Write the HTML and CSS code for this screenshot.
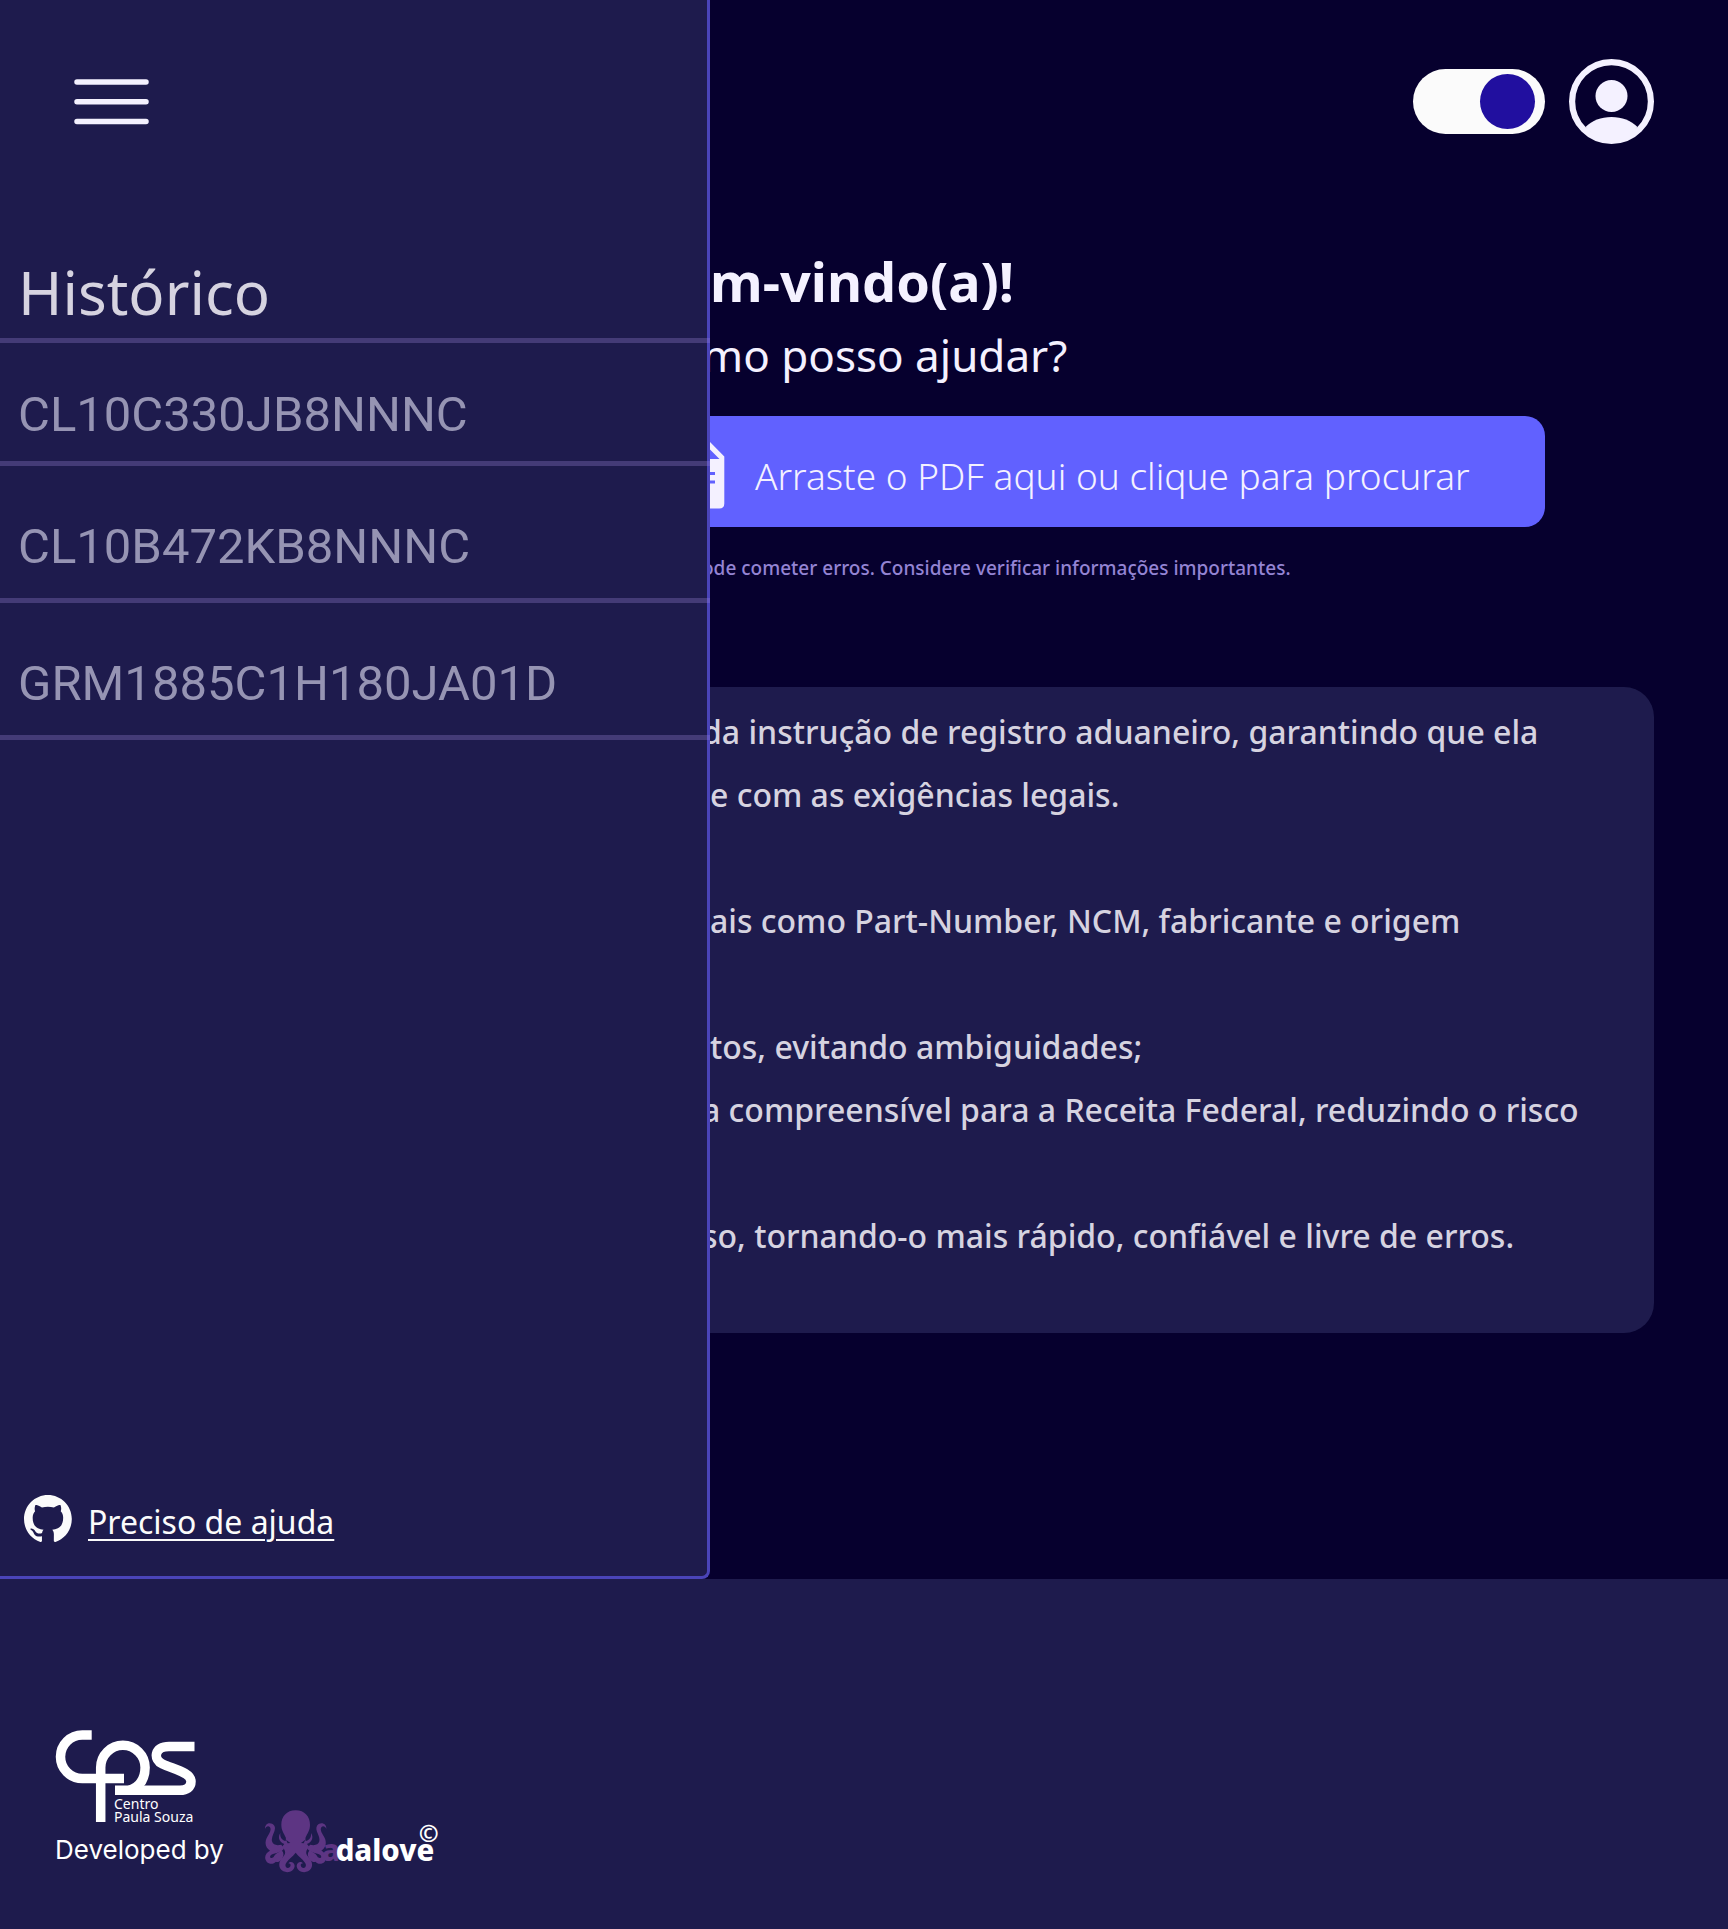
FILE: index.html
```html
<!DOCTYPE html>
<html lang="pt-BR">
<head>
<meta charset="utf-8">
<meta name="viewport" content="width=device-width, initial-scale=1">
<title>Histórico</title>
<link rel="stylesheet" href="styles.css">
</head>
<body>
<div class="shell">
  <aside class="sidebar">
    <button class="menu-button" type="button" aria-label="Menu">
      <svg width="75" height="46" viewBox="0 0 75 46" aria-hidden="true">
        <path d="M3 3H72M3 22.700H72M3 42.500H72" stroke="#f4f1ff" stroke-width="5.500" stroke-linecap="round"/>
      </svg>
    </button>
    <h2 class="history-title">Histórico</h2>
    <ul class="history-list">
      <li>CL10C330JB8NNNC</li>
      <li>CL10B472KB8NNNC</li>
      <li>GRM1885C1H180JA01D</li>
    </ul>
    <div class="help">
      <svg width="48" height="47" viewBox="0 0 98 96" aria-hidden="true">
        <path fill="#fbfbfb" fill-rule="evenodd" d="M48.854 0C21.839 0 0 22 0 49.217c0 21.756 13.993 40.172 33.405 46.690 2.427.490 3.316-1.059 3.316-2.362 0-1.141-.080-5.052-.080-9.127-13.590 2.934-16.420-5.867-16.420-5.867-2.184-5.704-5.420-7.170-5.420-7.170-4.448-3.015.324-3.015.324-3.015 4.934.326 7.523 5.052 7.523 5.052 4.367 7.496 11.404 5.378 14.235 4.074.404-3.178 1.699-5.378 3.074-6.600-10.839-1.141-22.243-5.378-22.243-24.283 0-5.378 1.940-9.778 5.014-13.200-.485-1.222-2.184-6.275.486-13.038 0 0 4.125-1.304 13.426 5.052a46.970 46.970 0 0 1 12.214-1.630c4.125 0 8.330.571 12.213 1.630 9.302-6.356 13.427-5.052 13.427-5.052 2.670 6.763.970 11.816.485 13.038 3.155 3.422 5.015 7.822 5.015 13.200 0 18.905-11.404 23.060-22.324 24.283 1.780 1.548 3.316 4.481 3.316 9.126 0 6.600-.080 11.897-.080 13.526 0 1.304.890 2.853 3.316 2.364 19.412-6.520 33.405-24.935 33.405-46.691C97.707 22 75.788 0 48.854 0z"/>
      </svg>
      <a href="#ajuda">Preciso de ajuda</a>
    </div>
  </aside>

  <main class="content">
    <header class="toolbar">
      <input class="switch" type="checkbox" role="switch" aria-label="Tema escuro" checked>
      <button class="account" type="button" aria-label="Conta">
        <svg width="85" height="85" viewBox="0 0 85 85" aria-hidden="true">
          <circle cx="42.500" cy="42.500" r="39.400" fill="none" stroke="#f4f1ff" stroke-width="6.200"/>
          <circle cx="42.500" cy="37" r="16" fill="#f4f1ff"/>
          <path fill="#f4f1ff" d="M16.500 68C23 61.500 32 58 42.500 58S62 61.500 68.500 68C62 76 53 82 42.500 82S23 76 16.500 68z"/>
        </svg>
      </button>
    </header>

    <h1 class="welcome">m-vindo(a)!</h1>
    <p class="question tucked">mo posso ajudar?</p>
    <button class="upload" type="button">
      <svg width="15" height="67" viewBox="0 0 15 67" aria-hidden="true">
        <path fill="#f4f1ff" fill-rule="evenodd" d="M0 0L14.300 14.500V61.500Q14.300 66.500 9.300 66.500H0ZM0 7.500V17H9.500ZM0 30V33H5V30ZM0 38.500V41.500H5V38.500Z"/>
      </svg>
      <span>Arraste o PDF aqui ou clique para procurar</span>
    </button>
    <p class="notice tucked">ode cometer erros. Considere verificar informações importantes.</p>

    <section class="card">
      <p class="tucked">da instrução de registro aduaneiro, garantindo que ela</p>
      <p>e com as exigências legais.</p>
      <p class="after-break">ais como Part-Number, NCM, fabricante e origem</p>
      <p class="after-break">tos, evitando ambiguidades;</p>
      <p class="tucked">a compreensível para a Receita Federal, reduzindo o risco</p>
      <p class="after-break tucked">so, tornando-o mais rápido, confiável e livre de erros.</p>
    </section>
  </main>
</div>

<footer class="footer">
  <div class="developer">
    <svg width="141" height="93" viewBox="0 0 141 93" role="img" aria-label="CPS Centro Paula Souza">
      <g fill="none" stroke="#fff" stroke-width="9.500">
        <path d="M36.700 5H27.300A21.800 21.800 0 0 0 27.300 48.600H69"/>
        <path d="M45.700 92V37.500A22.200 22.200 0 0 1 90.100 37.500C90.100 49 84.500 57 74 60.500"/>
        <path d="M139.500 16.500H114C99 16.500 98 29.500 107.500 34C118 39 136 42 136 51.500C136 57.500 131.500 60.300 125 60.300H60"/>
      </g>
      <g fill="#fff" class="cps-text">
        <text x="59" y="79">Centro</text>
        <text x="59" y="92">Paula Souza</text>
      </g>
    </svg>
    <p>Developed by</p>
  </div>
  <svg class="adalove" width="176" height="63" viewBox="30 38 528 189" role="img" aria-label="Adalove">
    <g fill="#5d3583">
      <path d="M125 39C98 39 82 58 82 82C82 100 90 108 95 120C98 132 92 140 84 148C94 158 98 168 86 180C72 194 72 214 88 222C104 229 121 220 122 206C121 194 109 190 103 198C110 198 112 204 107 210C98 216 90 206 97 196C105 184 116 178 125 166C134 178 145 184 153 196C160 206 152 216 143 210C138 204 140 198 147 198C141 190 129 194 128 206C129 220 146 229 162 222C178 214 178 194 164 180C152 168 156 158 166 148C158 140 152 132 155 120C160 108 168 100 168 82C168 58 152 39 125 39Z"/>
      <path d="M33 95C32 77 51 72 61 85C69 100 50 115 54 132C57 144 70 145 82 142L90 154C82 166 65 165 52 172C44 178 50 186 58 180L68 184C68 200 48 204 38 193C28 180 36 166 48 160C35 152 31 137 38 122C43 111 54 100 48 90C43 84 36 87 33 95Z"/>
      <path d="M217 95C218 77 199 72 189 85C181 100 200 115 196 132C193 144 180 145 168 142L160 154C168 166 185 165 198 172C206 178 200 186 192 180L182 184C182 200 202 204 212 193C222 180 214 166 202 160C215 152 219 137 212 122C207 111 196 100 202 90C207 84 214 87 217 95Z"/>
      <path d="M79 107C68 123 80 139 98 142L101 132C87 131 77 123 79 107ZM171 107C182 123 170 139 152 142L149 132C163 131 173 123 171 107Z"/>
      <path d="M82 158C67 171 62 168 56 186C62 199 78 195 84 184C90 175 90 165 82 158ZM168 158C183 171 188 168 194 186C188 199 172 195 166 184C160 175 160 165 168 158Z"/>
    </g>
    <path fill="#1e1b4d" d="M96 127L109 137L101 138ZM154 127L141 137L149 138Z"/>
    <text class="wordmark" x="204" y="192" fill="#5d3583">a</text>
    <text class="wordmark" x="245" y="192" fill="#fff">dalove</text>
    <text class="mark" x="494" y="134" fill="#fff">©</text>
  </svg>
</footer>
</body>
</html>
```
FILE: styles.css
```css
* {
  box-sizing: border-box;
}

body {
  margin: 0;
  background: #1e1b4d;
  color: #f4f1ff;
  font-family: "Noto Sans", sans-serif;
}

h1,
h2,
p,
ul {
  margin: 0;
  padding: 0;
}

button {
  margin: 0;
  padding: 0;
  border: 0;
  background: none;
  color: inherit;
  font: inherit;
  cursor: pointer;
}

svg {
  display: block;
  flex: none;
}

.shell {
  display: grid;
  grid-template-columns: 710px minmax(0, 1fr);
  background: #06002e;
}

/* History sidebar */
.sidebar {
  display: flex;
  flex-direction: column;
  border: solid #4a44b8;
  border-width: 0 3px 3px 0;
  border-radius: 0 0 8px 0;
  background: #1e1b4d;
}

.menu-button {
  align-self: flex-start;
  margin: 79px 0 0 74px;
}

.history-title {
  margin: 132px -3px 0 0;
  padding: 0 18px 11px;
  border-bottom: 5px solid rgba(158, 137, 218, 0.3);
  color: #d6d3e0;
  font-size: 60px;
  font-weight: 400;
  line-height: 70px;
}

.history-list {
  margin-right: -3px;
  list-style: none;
}

.history-list li {
  padding: 51px 18px 21px;
  border-bottom: 5px solid rgba(158, 137, 218, 0.3);
  color: #9694b3;
  font-family: Roboto, sans-serif;
  font-size: 49px;
  line-height: 60px;
}

.history-list li:first-child {
  padding: 42px 18px 16px;
}

.help {
  display: flex;
  align-items: center;
  gap: 16px;
  margin-top: auto;
  padding: 0 24px 30px;
}

.help a {
  padding-top: 8px;
  color: #fbfbfb;
  font-size: 32px;
  line-height: 48px;
  text-decoration-thickness: 2px;
  text-underline-offset: 5px;
}

/* Main column */
.content {
  overflow: hidden;
  padding: 59px 0 246px;
}

.toolbar {
  display: flex;
  align-items: center;
  justify-content: flex-end;
  gap: 24px;
  margin-right: 74px;
}

.switch {
  display: flex;
  align-items: center;
  justify-content: flex-start;
  width: 132px;
  height: 65px;
  margin: 0;
  padding: 0 10px;
  border-radius: 33px;
  background: #fbfbfb;
  appearance: none;
  cursor: pointer;
}

.switch:checked {
  justify-content: flex-end;
}

.switch::before {
  content: "";
  width: 55px;
  height: 55px;
  border-radius: 50%;
  background: #210f9f;
}

.tucked {
  margin-left: -8px;
}

.welcome {
  margin-top: 105px;
  font-size: 54px;
  font-weight: 700;
  line-height: 64px;
}

.question {
  margin-top: 12px;
  font-size: 44px;
  line-height: 60px;
}

.upload {
  display: flex;
  align-items: center;
  gap: 30px;
  width: calc(100% - 183px);
  height: 111px;
  margin-top: 31px;
  padding-top: 8px;
  border-radius: 0 20px 20px 0;
  background: #6161ff;
  font-size: 37px;
  font-weight: 300;
  white-space: nowrap;
}

.notice {
  margin-top: 27px;
  color: #9484d4;
  font-size: 19px;
  font-weight: 500;
  line-height: 28px;
}

.card {
  margin: 105px 74px 0 0;
  padding: 13px 0 66px;
  border-radius: 0 30px 30px 0;
  background: #1e1b4d;
  color: #d6d3e0;
  font-size: 32px;
  font-weight: 500;
  line-height: 63px;
}

.after-break {
  margin-top: 63px;
}

/* Footer */
.footer {
  display: flex;
  align-items: flex-end;
  gap: 40px;
  padding: 151px 55px 58px;
  background: #1e1b4d;
}

.developer {
  display: flex;
  flex-direction: column;
  gap: 10px;
  padding-bottom: 6px;
}

.developer p {
  color: #fff;
  font-family: Inter, sans-serif;
  font-size: 26px;
  line-height: 34px;
}

.cps-text {
  font-size: 14px;
}

.wordmark {
  font-size: 88px;
  font-weight: 800;
}

.mark {
  font-size: 72px;
  font-weight: 700;
}
```
